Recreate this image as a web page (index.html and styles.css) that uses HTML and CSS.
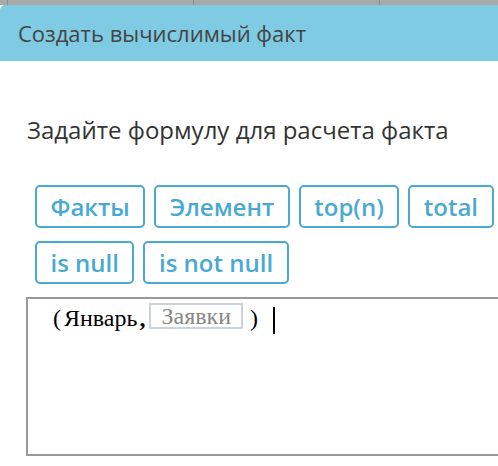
FILE: index.html
```html
<!DOCTYPE html>
<html>
<head>
<meta charset="utf-8">
<link rel="stylesheet" href="styles.css">
</head>
<body>
<div class="backdrop">
  <div class="cell"></div><div class="cell"></div><div class="cell"></div>
</div>
<div class="modal">
  <div class="modal-header">Создать вычислимый факт</div>
  <div class="modal-body">
    <p class="prompt">Задайте формулу для расчета факта</p>
    <div class="buttons">
      <button class="btn">Факты</button>
      <button class="btn">Элемент</button>
      <button class="btn">top(n)</button>
      <button class="btn">total</button>
      <button class="btn">is null</button>
      <button class="btn">is not null</button>
    </div>
    <div class="editor">
      <span class="tok paren">(</span><span class="tok">Январь</span><span class="tok comma">,</span><span class="chip">Заявки</span><span class="tok paren-close">)</span><span class="caret"></span>
    </div>
  </div>
</div>
</body>
</html>
```
FILE: styles.css
```css
html, body {
  margin: 0;
  padding: 0;
  background: #ffffff;
  overflow: hidden;
}
body {
  width: 498px;
  height: 466px;
  font-family: "Open Sans", "Noto Sans", sans-serif;
}
.backdrop {
  display: grid;
  grid-template-columns: 186px 186px 1fr;
  height: 5px;
  background: #a9a9a9;
  padding-left: 7px;
}
.cell {
  border-left: 1px solid #8f8f8f;
}
.modal {
  background: #fff;
}
.modal-header {
  height: 56px;
  box-sizing: border-box;
  background: #7ecbe3;
  border-top-left-radius: 5px;
  color: #444;
  font-size: 22px;
  line-height: 56px;
  padding-left: 18px;
}
.modal-body {
  padding: 0 0 0 26px;
}
.prompt {
  margin: 53px 0 0 1px;
  font-size: 24px;
  line-height: 32px;
  color: #333;
}
.buttons {
  display: flex;
  flex-wrap: wrap;
  gap: 13px 9px;
  margin: 39px 0 0 9px;
  width: 463px;
}
.btn {
  font-family: "Open Sans", "Noto Sans", sans-serif;
  font-weight: 600;
  font-size: 24px;
  color: #4aa9d3;
  background: #fff;
  border: 2px solid #4aa9d3;
  border-radius: 5px;
  height: 43px;
  padding: 0 13.5px;
  line-height: 39px;
}
.editor {
  margin-top: 13px;
  height: 159px;
  box-sizing: border-box;
  border: 2px solid #999;
  border-right: none;
  padding: 5px 0 0 25px;
  display: flex;
  align-items: flex-start;
  font-family: "Liberation Serif", "DejaVu Serif", serif;
  font-size: 24px;
  color: #000;
}
.tok {
  line-height: 28px;
}
.paren {
  margin-right: 3px;
}
.comma {
  margin-left: 2px;
  margin-right: 4px;
  font-weight: bold;
}
.chip {
  border: 2px solid #cbd2dc;
  color: #888;
  font-size: 24px;
  padding: 0 10px;
  line-height: 22px;
  height: 26px;
  box-sizing: border-box;
  margin-top: -1px;
  margin-right: 1px;
}
.paren-close {
  margin-left: 6px;
}
.caret {
  width: 2px;
  height: 27px;
  background: #000;
  margin-left: 15px;
  margin-top: 3px;
}
```
